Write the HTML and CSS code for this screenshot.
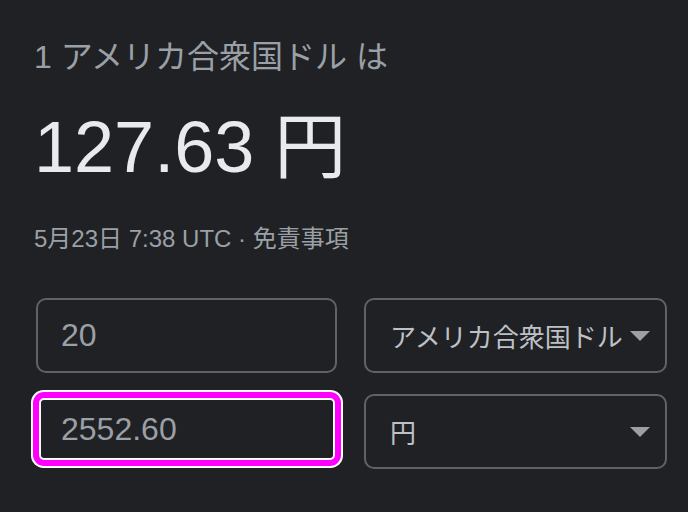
FILE: index.html
```html
<!DOCTYPE html>
<html lang="ja">
<head>
<meta charset="utf-8">
<title>通貨換算</title>
<link rel="stylesheet" href="styles.css">
</head>
<body>
<main class="card">
  <div class="title">1 アメリカ合衆国ドル は</div>
  <div class="result">127.63 円</div>
  <div class="meta">5月23日 7:38 UTC · 免責事項</div>
  <div class="grid">
    <div class="cell">
      <input class="amount" type="text" value="20">
    </div>
    <div class="select" role="listbox">
      <span class="select-label">アメリカ合衆国ドル</span>
      <svg class="arrow" width="20" height="10" viewBox="0 0 20 10"><polygon points="0,0 20,0 10,10"/></svg>
    </div>
    <div class="cell">
      <input class="amount focused" type="text" value="2552.60">
    </div>
    <div class="select" role="listbox">
      <span class="select-label">円</span>
      <svg class="arrow" width="20" height="10" viewBox="0 0 20 10"><polygon points="0,0 20,0 10,10"/></svg>
    </div>
  </div>
</main>
</body>
</html>
```

FILE: styles.css
```css
html, body {
  margin: 0;
  padding: 0;
  background: #202124;
}

body {
  font-family: "Liberation Sans", "Noto Sans CJK JP", sans-serif;
  width: 688px;
  height: 512px;
  overflow: hidden;
}

.card {
  padding: 37px 21px 0 34px;
}

.title {
  font-size: 32px;
  line-height: 40px;
  color: #9aa0a6;
  white-space: nowrap;
}

.result {
  margin-top: 30px;
  font-size: 72px;
  line-height: 80px;
  color: #e8eaed;
  white-space: nowrap;
}

.meta {
  margin-top: 37px;
  font-size: 24px;
  line-height: 30px;
  color: #9aa0a6;
  white-space: nowrap;
}

.grid {
  margin-top: 44px;
  margin-left: 2px;
  display: grid;
  grid-template-columns: 301px 303px;
  grid-template-rows: 75px 75px;
  column-gap: 27px;
  row-gap: 21px;
}

.cell {
  display: flex;
}

.amount {
  flex: 1;
  min-width: 0;
  box-sizing: border-box;
  margin: 0;
  border: 2px solid #5f6368;
  border-radius: 10px;
  background: #202124;
  color: #9aa0a6;
  font-family: "Liberation Sans", sans-serif;
  font-size: 32px;
  padding: 0 0 0 23px;
  outline: none;
}

.amount.focused {
  margin: 4px 2px 9px 3px;
  border: 2px solid #ffffff;
  border-radius: 5px;
  padding-left: 20px;
  box-shadow: 0 0 0 6px #ff00ff, 0 0 0 8px #ffffff;
}

.select {
  box-sizing: border-box;
  border: 2px solid #5f6368;
  border-radius: 10px;
  display: flex;
  align-items: center;
  padding: 0 15px 0 24px;
  gap: 8px;
  color: #bdc1c6;
  font-size: 26px;
}

.select-label {
  flex: 1;
  white-space: nowrap;
  overflow: hidden;
}

.arrow {
  flex: none;
  fill: #9aa0a6;
}
```
